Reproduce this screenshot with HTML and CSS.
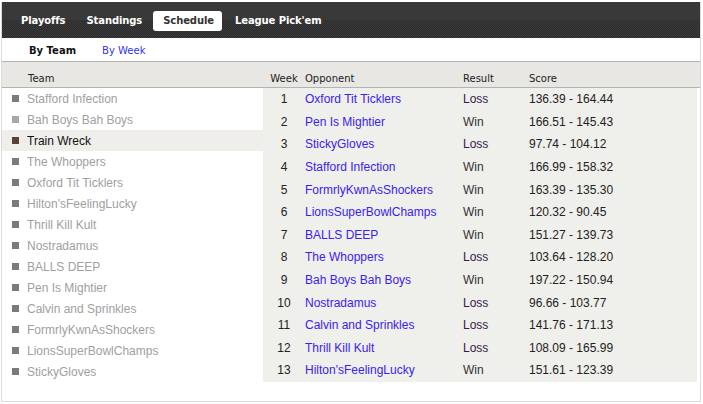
FILE: index.html
```html
<!DOCTYPE html>
<html>
<head>
<meta charset="utf-8">
<link rel="stylesheet" href="styles.css">
</head>
<body>
<div class="frame">
  <nav class="tabs">
    <a class="tab">Playoffs</a>
    <a class="tab">Standings</a>
    <a class="tab active">Schedule</a>
    <a class="tab">League Pick'em</a>
  </nav>
  <div class="subnav">
    <span class="sub current">By Team</span>
    <a class="sub link">By Week</a>
  </div>
  <div class="head">
    <div class="h-team">Team</div>
    <div class="grid">
      <div class="c-week">Week</div>
      <div>Opponent</div>
      <div>Result</div>
      <div>Score</div>
    </div>
  </div>
  <div class="body">
    <ul class="teams">
      <li><i></i>Stafford Infection</li>
      <li class="hover"><i></i>Bah Boys Bah Boys</li>
      <li class="sel"><i></i>Train Wreck</li>
      <li><i></i>The Whoppers</li>
      <li><i></i>Oxford Tit Ticklers</li>
      <li><i></i>Hilton'sFeelingLucky</li>
      <li><i></i>Thrill Kill Kult</li>
      <li><i></i>Nostradamus</li>
      <li><i></i>BALLS DEEP</li>
      <li><i></i>Pen Is Mightier</li>
      <li><i></i>Calvin and Sprinkles</li>
      <li><i></i>FormrlyKwnAsShockers</li>
      <li><i></i>LionsSuperBowlChamps</li>
      <li><i></i>StickyGloves</li>
    </ul>
    <div class="sched">
      <div class="grid row"><div class="c-week">1</div><a class="opp">Oxford Tit Ticklers</a><div class="loss">Loss</div><div>136.39 - 164.44</div></div>
      <div class="grid row"><div class="c-week">2</div><a class="opp">Pen Is Mightier</a><div class="win">Win</div><div>166.51 - 145.43</div></div>
      <div class="grid row"><div class="c-week">3</div><a class="opp">StickyGloves</a><div class="loss">Loss</div><div>97.74 - 104.12</div></div>
      <div class="grid row"><div class="c-week">4</div><a class="opp">Stafford Infection</a><div class="win">Win</div><div>166.99 - 158.32</div></div>
      <div class="grid row"><div class="c-week">5</div><a class="opp">FormrlyKwnAsShockers</a><div class="win">Win</div><div>163.39 - 135.30</div></div>
      <div class="grid row"><div class="c-week">6</div><a class="opp">LionsSuperBowlChamps</a><div class="win">Win</div><div>120.32 - 90.45</div></div>
      <div class="grid row"><div class="c-week">7</div><a class="opp">BALLS DEEP</a><div class="win">Win</div><div>151.27 - 139.73</div></div>
      <div class="grid row"><div class="c-week">8</div><a class="opp">The Whoppers</a><div class="loss">Loss</div><div>103.64 - 128.20</div></div>
      <div class="grid row"><div class="c-week">9</div><a class="opp">Bah Boys Bah Boys</a><div class="win">Win</div><div>197.22 - 150.94</div></div>
      <div class="grid row"><div class="c-week">10</div><a class="opp">Nostradamus</a><div class="loss">Loss</div><div>96.66 - 103.77</div></div>
      <div class="grid row"><div class="c-week">11</div><a class="opp">Calvin and Sprinkles</a><div class="loss">Loss</div><div>141.76 - 171.13</div></div>
      <div class="grid row"><div class="c-week">12</div><a class="opp">Thrill Kill Kult</a><div class="loss">Loss</div><div>108.09 - 165.99</div></div>
      <div class="grid row"><div class="c-week">13</div><a class="opp">Hilton'sFeelingLucky</a><div class="win">Win</div><div>151.61 - 123.39</div></div>
    </div>
  </div>
</div>
</body>
</html>
```

FILE: styles.css
```css
html, body {
  margin: 0;
  padding: 0;
  background: #fff;
}
body {
  padding: 2px 2px 0 1px;
}
.frame {
  width: 698px;
  height: 399px;
  border: 1px solid #dcdcdc;
  border-top: none;
  display: flex;
  flex-direction: column;
  box-sizing: content-box;
}
.tabs {
  height: 36px;
  flex: none;
  display: flex;
  align-items: center;
  gap: 3px;
  padding-left: 9px;
  padding-top: 2px;
  box-sizing: border-box;
  background:
    linear-gradient(#393939, #393939) top / 100% 18px no-repeat,
    repeating-conic-gradient(#2b2b2b 0 25%, #3b3b3b 0 50%) 0 0 / 2px 2px;
  font-family: "DejaVu Sans", Verdana, sans-serif;
  font-weight: bold;
  font-size: 10px;
  letter-spacing: -0.1px;
}
.tab {
  color: #fff;
  padding: 4px 8px 4px 10px;
  border-radius: 3px;
  line-height: 12px;
}
.tab.active {
  background: #fff;
  color: #333;
}
.subnav {
  height: 24px;
  flex: none;
  border-bottom: 1px solid #b4b4ae;
  display: flex;
  align-items: center;
  padding-left: 27px;
  padding-top: 1px;
  box-sizing: border-box;
  gap: 26px;
  font-family: "DejaVu Sans", Verdana, sans-serif;
  font-size: 10px;
}
.sub.current {
  font-weight: bold;
  color: #111;
}
.sub.link {
  color: #3333ee;
}
.head {
  height: 26px;
  flex: none;
  background: #e8e7e3;
  border-bottom: 1px solid #b4b4ae;
  display: flex;
  align-items: flex-end;
  padding-bottom: 3px;
  box-sizing: border-box;
  font-family: "DejaVu Sans", Verdana, sans-serif;
  font-size: 10px;
  color: #222;
}
.h-team {
  width: 261px;
  padding-left: 26px;
  box-sizing: border-box;
}
.grid {
  display: grid;
  grid-template-columns: 42px 158px 66px 1fr;
  align-items: center;
}
.head .grid {
  flex: 1;
}
.c-week {
  text-align: center;
}
.body {
  display: flex;
  align-items: flex-start;
}
.teams {
  list-style: none;
  margin: 0;
  padding: 0;
  width: 261px;
  font-family: "Liberation Sans", Arial, sans-serif;
  font-size: 12px;
  color: #a0a0a0;
}
.teams li {
  height: 21px;
  display: flex;
  align-items: center;
  padding-left: 10px;
}
.teams i {
  width: 7px;
  height: 7px;
  background: #7b7b7b;
  margin-right: 8px;
}
.teams li.hover i {
  background: #a8a8a8;
}
.teams li.sel {
  background: #efeeea;
  color: #111;
}
.teams li.sel i {
  background: #5c4236;
}
.sched {
  width: 434px;
  background: #efefeb;
  font-family: "Liberation Sans", Arial, sans-serif;
  font-size: 12px;
  color: #222;
}
.row {
  height: 22.6px;
}
.opp {
  color: #3a22ee;
}
.loss {
  color: #3a1848;
}
.win {
  color: #333;
}
```
